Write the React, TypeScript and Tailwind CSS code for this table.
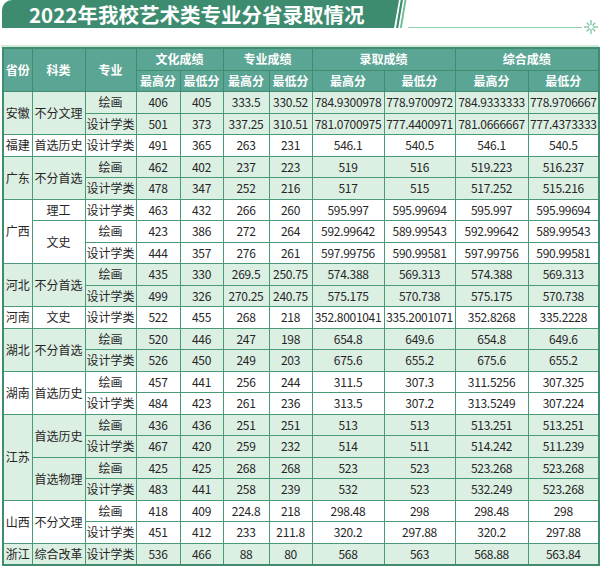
import React from "react";

type Row = {
  prov?: [string, number];
  cat?: [string, number];
  major: string;
  vals: string[];
  shade: boolean;
};

const raw: [string | null, number, string | null, number, string, string[]][] = [
  ["安徽", 2, "不分文理", 2, "绘画", ["406", "405", "333.5", "330.52", "784.9300978", "778.9700972", "784.9333333", "778.9706667"]],
  [null, 0, null, 0, "设计学类", ["501", "373", "337.25", "310.51", "781.0700975", "777.4400971", "781.0666667", "777.4373333"]],
  ["福建", 1, "首选历史", 1, "设计学类", ["491", "365", "263", "231", "546.1", "540.5", "546.1", "540.5"]],
  ["广东", 2, "不分首选", 2, "绘画", ["462", "402", "237", "223", "519", "516", "519.223", "516.237"]],
  [null, 0, null, 0, "设计学类", ["478", "347", "252", "216", "517", "515", "517.252", "515.216"]],
  ["广西", 3, "理工", 1, "设计学类", ["463", "432", "266", "260", "595.997", "595.99694", "595.997", "595.99694"]],
  [null, 0, "文史", 2, "绘画", ["423", "386", "272", "264", "592.99642", "589.99543", "592.99642", "589.99543"]],
  [null, 0, null, 0, "设计学类", ["444", "357", "276", "261", "597.99756", "590.99581", "597.99756", "590.99581"]],
  ["河北", 2, "不分首选", 2, "绘画", ["435", "330", "269.5", "250.75", "574.388", "569.313", "574.388", "569.313"]],
  [null, 0, null, 0, "设计学类", ["499", "326", "270.25", "240.75", "575.175", "570.738", "575.175", "570.738"]],
  ["河南", 1, "文史", 1, "设计学类", ["522", "455", "268", "218", "352.8001041", "335.2001071", "352.8268", "335.2228"]],
  ["湖北", 2, "不分首选", 2, "绘画", ["520", "446", "247", "198", "654.8", "649.6", "654.8", "649.6"]],
  [null, 0, null, 0, "设计学类", ["526", "450", "249", "203", "675.6", "655.2", "675.6", "655.2"]],
  ["湖南", 2, "首选历史", 2, "绘画", ["457", "441", "256", "244", "311.5", "307.3", "311.5256", "307.325"]],
  [null, 0, null, 0, "设计学类", ["484", "423", "261", "236", "313.5", "307.2", "313.5249", "307.224"]],
  ["江苏", 4, "首选历史", 2, "绘画", ["436", "436", "251", "251", "513", "513", "513.251", "513.251"]],
  [null, 0, null, 0, "设计学类", ["467", "420", "259", "232", "514", "511", "514.242", "511.239"]],
  [null, 0, "首选物理", 2, "绘画", ["425", "425", "268", "268", "523", "523", "523.268", "523.268"]],
  [null, 0, null, 0, "设计学类", ["483", "441", "258", "239", "532", "523", "532.249", "523.268"]],
  ["山西", 2, "不分文理", 2, "绘画", ["418", "409", "224.8", "218", "298.48", "298", "298.48", "298"]],
  [null, 0, null, 0, "设计学类", ["451", "412", "233", "211.8", "320.2", "297.88", "320.2", "297.88"]],
  ["浙江", 1, "综合改革", 1, "设计学类", ["536", "466", "88", "80", "568", "563", "568.88", "563.84"]],
];

const rows: Row[] = (() => {
  let group = -1;
  return raw.map(([p, ps, c, cs, major, vals]) => {
    if (p) group += 1;
    return {
      prov: p ? [p, ps] : undefined,
      cat: c ? [c, cs] : undefined,
      major,
      vals,
      shade: group % 2 === 0,
    };
  });
})();

const widths = [29, 53, 51, 44, 43, 46, 43, 72, 71, 73, 71];

const th =
  "border border-[#3f8c6f] bg-[#5aa594] text-white font-bold text-[12px] text-center align-middle p-0 leading-none";
const td =
  "border border-[#4a9a78] text-center align-middle p-0 leading-none text-[#262626] whitespace-nowrap";

function Burst() {
  const segs = [0, 45, 90, 135, 180, 225, 270, 315];
  return (
    <svg width="14" height="14" viewBox="0 0 14 14" className="shrink-0">
      {segs.map((a) => {
        const r = (a * Math.PI) / 180;
        const long = a % 90 === 0;
        const r1 = 2;
        const r2 = long ? 7 : 6;
        return (
          <line
            key={a}
            x1={7 + Math.cos(r) * r1}
            y1={7 + Math.sin(r) * r1}
            x2={7 + Math.cos(r) * r2}
            y2={7 + Math.sin(r) * r2}
            stroke="#6cc196"
            strokeWidth="1.2"
          />
        );
      })}
    </svg>
  );
}

export default function App() {
  return (
    <div
      className="w-[600px] h-[567px] bg-white overflow-hidden"
      style={{ fontFamily: '"Noto Sans CJK SC", "Noto Sans", sans-serif' }}
    >
      {/* Title bar */}
      <div className="flex items-start h-[34px] pl-[2px]">
        <div className="w-[397px] h-[28px] bg-[#3e8c6f] rounded-tl-[10px] [clip-path:polygon(0_0,100%_0,calc(100%-5px)_100%,0_100%)] flex items-center pl-[27px]">
          <span className="text-white font-bold text-[20.5px] leading-none">
            2022年我校艺术类专业分省录取情况
          </span>
        </div>
        <svg width="14" height="28" viewBox="0 0 14 28" className="shrink-0 ml-[-5px]">
          <polygon points="6.7,0 8.9,0 4.2,28 2,28" fill="#3e8c6f" />
          <polygon points="10.5,0 12.5,0 7.8,28 5.8,28" fill="#6cc196" />
        </svg>
        <div className="flex-1 h-px bg-[#8fd0ad] mt-[26.5px] mr-[2px]" />
        <div className="mt-[20px] mr-[2px]">
          <Burst />
        </div>
      </div>
      <div className="h-[1.5px] mt-[11px] bg-[#cfe9da] mx-[1px]" />

      {/* Table */}
      <table className="table-fixed border-collapse ml-[2px] w-[596px] border-[2px] border-[#3f8c6f]">
        <colgroup>
          {widths.map((w, i) => (
            <col key={i} style={{ width: w }} />
          ))}
        </colgroup>
        <thead>
          <tr className="h-[23px]">
            <th rowSpan={2} className={th}>省份</th>
            <th rowSpan={2} className={th}>科类</th>
            <th rowSpan={2} className={th}>专业</th>
            <th colSpan={2} className={th}>文化成绩</th>
            <th colSpan={2} className={th}>专业成绩</th>
            <th colSpan={2} className={th}>录取成绩</th>
            <th colSpan={2} className={th}>综合成绩</th>
          </tr>
          <tr className="h-[21px]">
            <th className={th}>最高分</th>
            <th className={th}>最低分</th>
            <th className={th}>最高分</th>
            <th className={th}>最低分</th>
            <th className={th}>最高分</th>
            <th className={th}>最低分</th>
            <th className={th}>最高分</th>
            <th className={th}>最低分</th>
          </tr>
        </thead>
        <tbody>
          {rows.map((r, i) => {
            const bg = r.shade ? "bg-[#dcefe3]" : "bg-white";
            return (
              <tr key={i} className={`h-[21.5px] ${bg}`}>
                {r.prov && (
                  <td rowSpan={r.prov[1]} className={`${td} text-[12px]`}>
                    {r.prov[0]}
                  </td>
                )}
                {r.cat && (
                  <td rowSpan={r.cat[1]} className={`${td} text-[12px]`}>
                    {r.cat[0]}
                  </td>
                )}
                <td className={`${td} text-[12px]`}>{r.major}</td>
                {r.vals.map((v, j) => (
                  <td key={j} className={`${td} text-[12px] tracking-[-0.3px]`}>
                    {v}
                  </td>
                ))}
              </tr>
            );
          })}
        </tbody>
      </table>
    </div>
  );
}
